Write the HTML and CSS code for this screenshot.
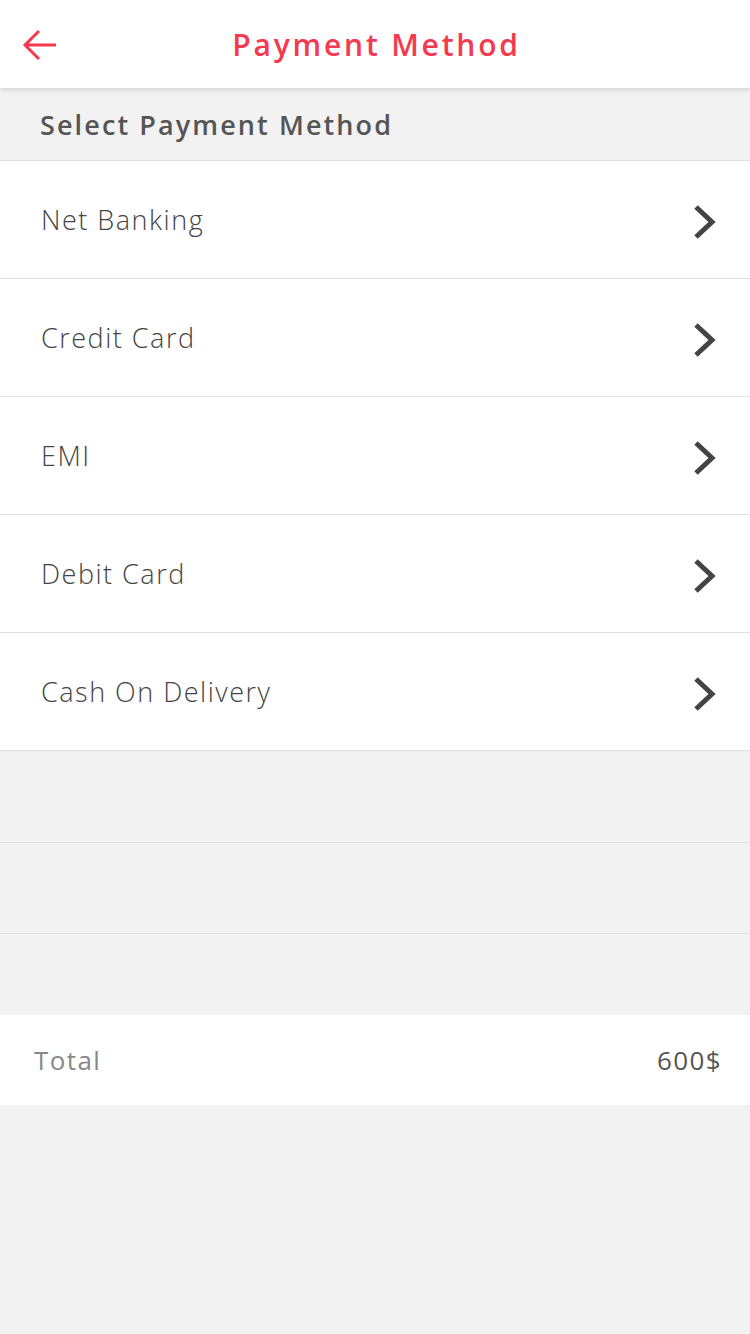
FILE: index.html
```html
<!DOCTYPE html>
<html>
<head>
<meta charset="utf-8">
<link rel="stylesheet" href="styles.css">
</head>
<body>
<div class="app">
  <header class="topbar">
    <span class="back">
      <svg width="36" height="32" viewBox="0 0 36 32"><path d="M34 16H3M17 2L3 16l14 14" fill="none" stroke="#f5394f" stroke-width="3"/></svg>
    </span>
    <h1 class="title">Payment Method</h1>
  </header>
  <div class="section-head">Select Payment Method</div>
  <ul class="methods">
    <li class="method"><span>Net Banking</span><svg class="chev" width="26" height="36" viewBox="0 0 26 36"><path d="M4 3l16 15L4 33" fill="none" stroke="#444" stroke-width="5"/></svg></li>
    <li class="method"><span>Credit Card</span><svg class="chev" width="26" height="36" viewBox="0 0 26 36"><path d="M4 3l16 15L4 33" fill="none" stroke="#444" stroke-width="5"/></svg></li>
    <li class="method"><span>EMI</span><svg class="chev" width="26" height="36" viewBox="0 0 26 36"><path d="M4 3l16 15L4 33" fill="none" stroke="#444" stroke-width="5"/></svg></li>
    <li class="method"><span>Debit Card</span><svg class="chev" width="26" height="36" viewBox="0 0 26 36"><path d="M4 3l16 15L4 33" fill="none" stroke="#444" stroke-width="5"/></svg></li>
    <li class="method"><span>Cash On Delivery</span><svg class="chev" width="26" height="36" viewBox="0 0 26 36"><path d="M4 3l16 15L4 33" fill="none" stroke="#444" stroke-width="5"/></svg></li>
  </ul>
  <div class="spacer s1"></div>
  <div class="spacer s2"></div>
  <div class="spacer s3"></div>
  <div class="total">
    <span class="total-label">Total</span>
    <span class="total-value">600$</span>
  </div>
</div>
</body>
</html>
```

FILE: styles.css
```css
* { box-sizing: border-box; }
html, body { margin: 0; padding: 0; }
body {
  background: #f2f2f2;
  font-family: "Open Sans", "Noto Sans", sans-serif;
  width: 750px;
  min-height: 1334px;
}
.app { width: 750px; }
.topbar {
  height: 88px;
  background: #fff;
  display: flex;
  align-items: center;
  justify-content: center;
  box-shadow: 0 2px 4px rgba(0,0,0,0.12);
  position: relative;
  z-index: 1;
}
.back {
  position: absolute;
  left: 22px;
  top: 29px;
  display: flex;
}
.title {
  margin: 0 0 0 3px;
  color: #f5394f;
  font-size: 30px;
  font-weight: 600;
  letter-spacing: 2.8px;
}
.section-head {
  height: 73px;
  padding-left: 40px;
  display: flex;
  align-items: center;
  font-size: 27px;
  font-weight: 600;
  color: #555;
  border-bottom: 1px solid #e0e0e0;
  letter-spacing: 2.1px;
}
.methods {
  list-style: none;
  margin: 0;
  padding: 0;
  background: #fff;
}
.method {
  height: 118px;
  border-bottom: 1px solid #e0e0e0;
  display: flex;
  align-items: center;
  justify-content: space-between;
  padding: 0 32px 0 41px;
  font-size: 27px;
  font-weight: 300;
  color: #444;
  letter-spacing: 1.5px;
}
.chev { display: block; margin-top: 4px; }
.spacer { border-bottom: 1px solid #e0e0e0; }
.s1 { height: 92px; }
.s2 { height: 91px; }
.s3 { height: 81px; border-bottom: none; }
.total {
  height: 90px;
  background: #fff;
  display: flex;
  align-items: center;
  justify-content: space-between;
  padding: 0 28px 0 34px;
  font-size: 26px;
  letter-spacing: 1.4px;
}
.total-label { color: #888; }
.total-value { color: #555; }
```
